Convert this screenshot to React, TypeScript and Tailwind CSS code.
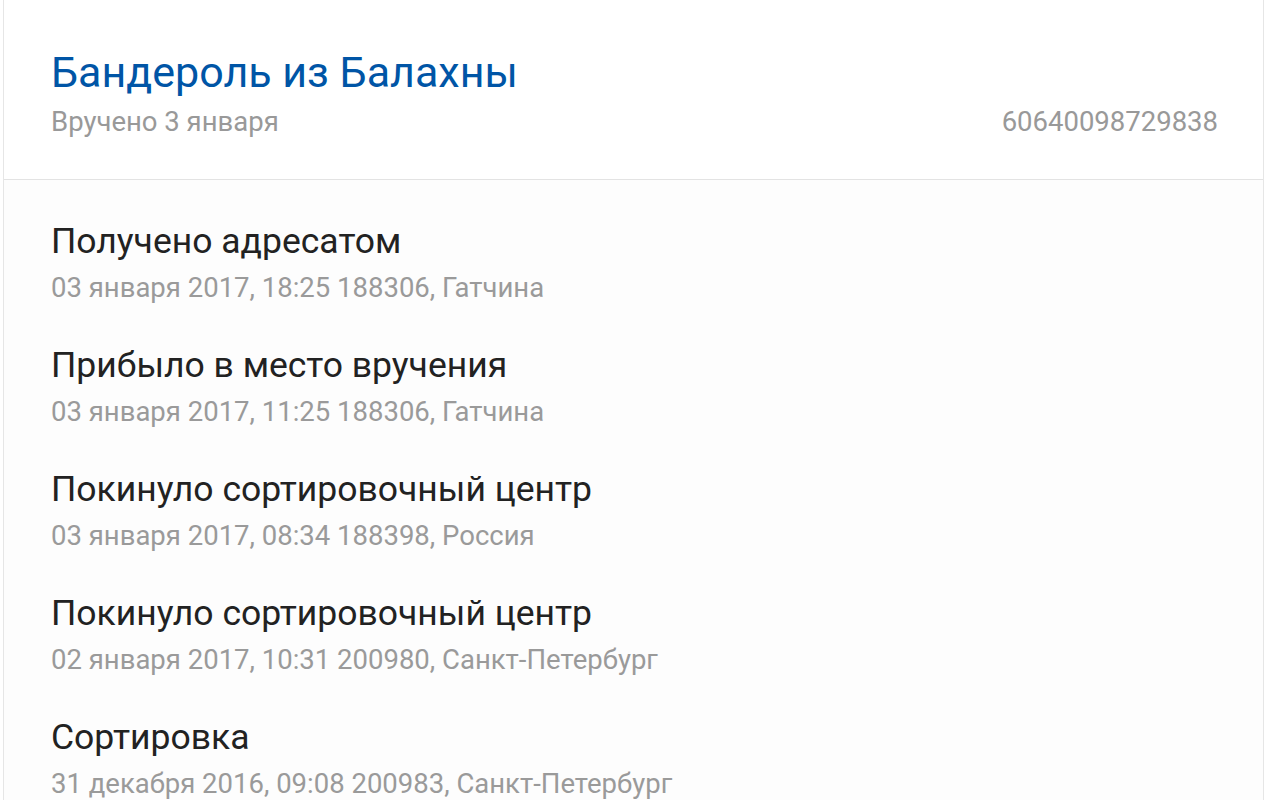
const events = [
  { title: 'Получено адресатом', info: '03 января 2017, 18:25 188306, Гатчина' },
  { title: 'Прибыло в место вручения', info: '03 января 2017, 11:25 188306, Гатчина' },
  { title: 'Покинуло сортировочный центр', info: '03 января 2017, 08:34 188398, Россия' },
  { title: 'Покинуло сортировочный центр', info: '02 января 2017, 10:31 200980, Санкт-Петербург' },
  { title: 'Сортировка', info: '31 декабря 2016, 09:08 200983, Санкт-Петербург' },
];

export default function App() {
  return (
    <div className="min-h-screen bg-white font-['Roboto',sans-serif]">
      <div className="ml-[3px] mr-[2px] border-x border-[#e6e6e6] min-h-screen">
        {/* Header */}
        <div className="pl-[47px] pr-[45px] pt-[48px] pb-[41px] border-b border-[#e3e3e3]">
          <h1 className="text-[43px] leading-[48px] text-[#0055a6]">Бандероль из Балахны</h1>
          <div className="mt-[10px] flex items-center justify-between text-[27.5px] leading-[32px] text-[#999999]">
            <span>Вручено 3 января</span>
            <span>60640098729838</span>
          </div>
        </div>

        {/* Tracking events */}
        <div className="px-[47px] pt-[41px] bg-[#fdfdfd]">
          {events.map((e, i) => (
            <div key={i} className="pb-[40px]">
              <div className="text-[35.5px] leading-[40px] text-[#222222]">{e.title}</div>
              <div className="mt-[10px] text-[27.5px] leading-[34px] text-[#9a9a9a]">{e.info}</div>
            </div>
          ))}
        </div>
      </div>
    </div>
  );
}
